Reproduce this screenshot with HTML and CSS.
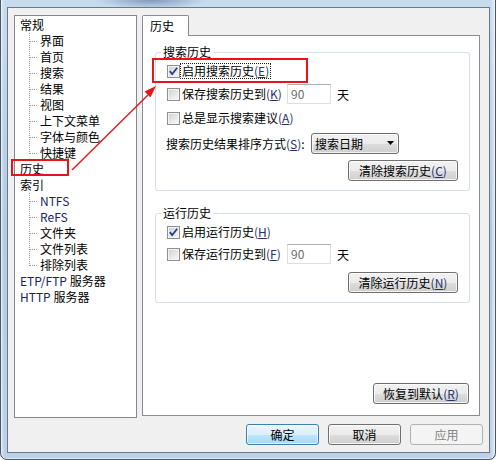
FILE: index.html
```html
<!DOCTYPE html>
<html lang="zh-CN">
<head>
<meta charset="utf-8">
<title>选项</title>
<link rel="stylesheet" href="styles.css">
</head>
<body>
<div class="window">
  <div class="dialog">
    <div class="main">
      <ul class="tree">
        <li><div class="item">常规</div>
          <ul class="sub">
            <li>界面</li>
            <li>首页</li>
            <li>搜索</li>
            <li>结果</li>
            <li>视图</li>
            <li>上下文菜单</li>
            <li>字体与颜色</li>
            <li>快捷键</li>
          </ul>
        </li>
        <li><div class="item">历史</div></li>
        <li><div class="item">索引</div>
          <ul class="sub">
            <li class="lat">NTFS</li>
            <li class="lat">ReFS</li>
            <li>文件夹</li>
            <li>文件列表</li>
            <li>排除列表</li>
          </ul>
        </li>
        <li><div class="item"><span class="lat">ETP/FTP</span> 服务器</div></li>
        <li><div class="item"><span class="lat">HTTP</span> 服务器</div></li>
      </ul>

      <div class="tabs">
        <div class="tabstrip"><div class="tab">历史</div></div>
        <div class="page">
          <fieldset class="group g1">
            <legend>搜索历史</legend>
            <div class="gbody">
              <div class="row h22">
                <span class="cb"><svg viewBox="0 0 11 11" width="11" height="11"><path d="M1.8 5.2 L4.2 8 L9.2 1.8" fill="none" stroke="#2d3d8e" stroke-width="1.8"/></svg></span>
                <span class="lbl focus">启用搜索历史<span class="mn">(<u>E</u>)</span></span>
              </div>
              <div class="row h24">
                <span class="cb"></span>
                <span class="lbl wide">保存搜索历史到<span class="mn">(<u>K</u>)</span></span>
                <span class="num">90</span>
                <span class="unit">天</span>
              </div>
              <div class="row h24">
                <span class="cb"></span>
                <span class="lbl">总是显示搜索建议<span class="mn">(<u>A</u>)</span></span>
              </div>
              <div class="row h26">
                <span class="plain">搜索历史结果排序方式<span class="mn">(<u>S</u>)</span>:</span>
                <span class="select">搜索日期<svg class="arrow" viewBox="0 0 7 4" width="7" height="4"><path d="M0 0 H7 L3.5 4 Z" fill="#000"/></svg></span>
              </div>
              <div class="btnrow m4">
                <span class="btn w110">清除搜索历史<span class="mn">(<u>C</u>)</span></span>
              </div>
            </div>
          </fieldset>

          <fieldset class="group g2">
            <legend>运行历史</legend>
            <div class="gbody">
              <div class="row h22">
                <span class="cb"><svg viewBox="0 0 11 11" width="11" height="11"><path d="M1.8 5.2 L4.2 8 L9.2 1.8" fill="none" stroke="#2d3d8e" stroke-width="1.8"/></svg></span>
                <span class="lbl">启用运行历史<span class="mn">(<u>H</u>)</span></span>
              </div>
              <div class="row h22">
                <span class="cb"></span>
                <span class="lbl wide">保存运行历史到<span class="mn">(<u>F</u>)</span></span>
                <span class="num">90</span>
                <span class="unit">天</span>
              </div>
              <div class="btnrow m7">
                <span class="btn w110">清除运行历史<span class="mn">(<u>N</u>)</span></span>
              </div>
            </div>
          </fieldset>

          <span class="btn restore">恢复到默认<span class="mn">(<u>R</u>)</span></span>
        </div>
      </div>
    </div>

    <div class="buttons">
      <span class="btn dlg default">确定</span>
      <span class="btn dlg">取消</span>
      <span class="btn dlg disabled">应用</span>
    </div>
  </div>
</div>

<svg class="annot" width="496" height="460" viewBox="0 0 496 460">
  <rect x="12" y="160" width="56" height="15" fill="none" stroke="#e8141c" stroke-width="2"/>
  <rect x="153" y="59" width="154" height="23" fill="none" stroke="#e8141c" stroke-width="2"/>
  <line x1="72" y1="170" x2="148" y2="95" stroke="#e8141c" stroke-width="1.4"/>
  <polygon points="156,86 150.4,97.4 144.6,91.6" fill="#e8141c"/>
</svg>
</body>
</html>
```

FILE: styles.css
```css
* { box-sizing: border-box; }

html, body {
  margin: 0;
  padding: 0;
}

body {
  width: 496px;
  height: 460px;
  overflow: hidden;
  position: relative;
  background: #ffffff;
  font-family: "Noto Sans CJK SC", "Noto Sans", sans-serif;
  font-size: 12px;
  color: #000;
}

/* Aero glass frame */
.window {
  width: 496px;
  height: 460px;
  padding: 7px 5px 6px 6px;
  border: 1px solid #4b5866;
  border-top: none;
  border-radius: 0 0 7px 7px;
  background:
    radial-gradient(ellipse 55px 9px at 150px 0, rgba(70, 100, 140, 0.55), rgba(70, 100, 140, 0) 100%),
    linear-gradient(to right, rgba(255,255,255,0.55) 0, rgba(255,255,255,0) 3px, rgba(255,255,255,0) 490px, rgba(255,255,255,0.5) 493px, rgba(255,255,255,0) 494px),
    linear-gradient(to bottom, #c7dbef 0, #b2cae4 50%, #bcd2ea 100%);
  box-shadow: inset 1px 0 0 #e6eff8, inset -1px 0 0 #e6eff8, inset 0 -1px 0 #dde9f5;
}

.dialog {
  width: 483px;
  height: 446px;
  border: 1px solid #6a7889;
  background: #f0f0f0;
  padding: 7px 6px 0 6px;
}

.main {
  display: flex;
  gap: 5px;
  width: 466px;
  height: 403px;
  align-items: flex-start;
}

/* Tree */
.tree {
  list-style: none;
  margin: 0;
  padding: 1px 0 0 0;
  width: 123px;
  height: 403px;
  border: 1px solid #828790;
  background: #fff;
  flex: none;
}

.tree ul {
  list-style: none;
  margin: 0;
  padding: 0;
}

.item {
  height: 16px;
  line-height: 16px;
  padding-left: 5px;
  white-space: nowrap;
}

.sub > li {
  position: relative;
  height: 16px;
  line-height: 16px;
  padding-left: 25px;
  white-space: nowrap;
}

.sub > li::before {
  content: "";
  position: absolute;
  left: 15px;
  top: 8px;
  width: 8px;
  height: 1px;
  background: repeating-linear-gradient(to right, #9a9a9a 0 1px, transparent 1px 2px);
}

.sub > li::after {
  content: "";
  position: absolute;
  left: 14px;
  top: 0;
  width: 1px;
  height: 16px;
  background: repeating-linear-gradient(to bottom, #9a9a9a 0 1px, transparent 1px 2px);
}

.sub > li:last-child::after {
  height: 9px;
}

.lat { color: #1a2262; }
.mn { color: #26306c; }

/* Tabs */
.tabs {
  width: 338px;
  display: flex;
  flex-direction: column;
  flex: none;
}

.tabstrip {
  height: 20px;
  display: flex;
}

.tab {
  position: relative;
  z-index: 1;
  width: 47px;
  height: 21px;
  border: 1px solid #898c95;
  border-bottom: none;
  border-radius: 2px 2px 0 0;
  background: #fff;
  padding-left: 7px;
  line-height: 19px;
}

.page {
  height: 381px;
  border: 1px solid #898c95;
  background: #fff;
  display: flex;
  flex-direction: column;
}

.group {
  margin: 8px 9px 0 12px;
  padding: 0 0 9px 0;
  border: 1px solid #d5dfe5;
  border-radius: 3px;
  min-width: 0;
}

.g2 { margin-top: 14px; }

.group legend {
  margin-left: 5px;
  padding: 0 2px;
  height: 16px;
  line-height: 16px;
}

.gbody {
  padding: 0 11px;
}

.row {
  display: flex;
  align-items: center;
  white-space: nowrap;
}

.h22 { height: 22px; }
.h24 { height: 24px; }
.h26 { height: 26px; }

.cb {
  width: 13px;
  height: 13px;
  flex: none;
  border: 1px solid #8e8f8f;
  background: linear-gradient(135deg, #cdd0d5 0%, #e6e7e9 55%, #fafafa 100%);
  box-shadow: inset 0 0 0 1px #f3f3f3;
  display: flex;
  align-items: center;
  justify-content: center;
}

.cb svg { display: block; }

.lbl {
  border: 1px dotted transparent;
  padding: 0 1px;
  line-height: 14px;
  margin-left: 0;
}

.lbl.focus { border-color: #222; }

.lbl.wide { width: 107px; }

.num {
  width: 44px;
  height: 20px;
  border: 1px solid #dbdfe6;
  border-top-color: #abadb3;
  background: #fff;
  color: #6d6d6d;
  padding-left: 3px;
  line-height: 18px;
  flex: none;
}

.unit {
  margin-left: 6px;
}

.plain {
  margin-left: -1px;
  width: 145px;
}

.select {
  position: relative;
  width: 88px;
  height: 21px;
  border: 1px solid #707070;
  border-radius: 3px;
  background: linear-gradient(to bottom, #f2f2f2 0%, #ebebeb 50%, #dddddd 51%, #cfcfcf 100%);
  box-shadow: inset 0 0 0 1px rgba(255, 255, 255, 0.7);
  padding-left: 3px;
  line-height: 19px;
  display: flex;
  align-items: center;
  justify-content: space-between;
  padding-right: 4px;
}

.arrow { display: block; }

.btnrow {
  display: flex;
  justify-content: flex-end;
}

.m4 { margin-top: 4px; }
.m7 { margin-top: 7px; }

.btn {
  display: block;
  height: 21px;
  border: 1px solid #707070;
  border-radius: 3px;
  background: linear-gradient(to bottom, #f2f2f2 0%, #ebebeb 50%, #dddddd 51%, #cfcfcf 100%);
  box-shadow: inset 0 0 0 1px rgba(255, 255, 255, 0.75);
  text-align: center;
  line-height: 19px;
  white-space: nowrap;
  flex: none;
}

.w110 { width: 110px; }

.restore {
  width: 96px;
  margin-top: auto;
  align-self: flex-end;
  margin-right: 10px;
  margin-bottom: 11px;
}

.buttons {
  display: flex;
  justify-content: flex-end;
  gap: 9px;
  margin-top: 6px;
}

.dlg { width: 73px; }

.default {
  border-color: #3c7fb1;
  background: linear-gradient(to bottom, #eaf6fd 0%, #d9f0fc 50%, #bee6fd 51%, #a7d9f5 100%);
  box-shadow: inset 0 0 0 1px rgba(255, 255, 255, 0.6);
}

.disabled {
  border-color: #adb2b5;
  background: #f4f4f4;
  box-shadow: none;
  color: #838383;
}

/* Annotation overlay (red marks drawn over the screenshot) */
.annot {
  position: absolute;
  left: 0;
  top: 0;
  pointer-events: none;
}
```
